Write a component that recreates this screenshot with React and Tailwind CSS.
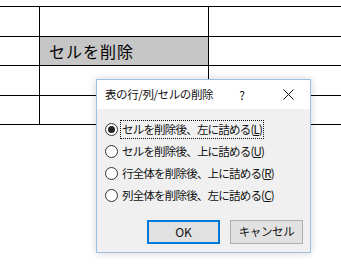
import React from 'react';

const font = { fontFamily: '"Noto Sans CJK JP", "Noto Sans", sans-serif' };

const options = [
  { label: 'セルを削除後、左に詰める', key: 'L', checked: true },
  { label: 'セルを削除後、上に詰める', key: 'U' },
  { label: '行全体を削除後、上に詰める', key: 'R' },
  { label: '列全体を削除後、左に詰める', key: 'C' },
];

const Row = ({ children, h }) => (
  <div className={`flex border-t border-black ${h}`}>
    <div className="w-[39px]" />
    <div className="w-[169px] border-l border-black flex">{children}</div>
    <div className="flex-1 border-l border-black" />
  </div>
);

const Radio = ({ checked }) => (
  <span className="w-[13px] h-[13px] rounded-full border border-[#333] bg-white flex items-center justify-center shrink-0">
    {checked && <span className="w-[7px] h-[7px] rounded-full bg-[#222]" />}
  </span>
);

export default function App() {
  return (
    <div className="relative w-[341px] h-[279px] bg-white overflow-hidden" style={font}>
      {/* table behind */}
      <div className="pt-[6px]">
        <Row h="h-[30px]" />
        <Row h="h-[29px]">
          <div className="flex-1 bg-[#c6c6c6] flex items-center pl-[9px] text-[16px] text-black tracking-[1px]">
            セルを削除
          </div>
        </Row>
        <Row h="h-[30px]" />
        <Row h="h-[29px]" />
        <div className="border-t border-black" />
      </div>

      {/* dialog */}
      <div className="absolute left-[96px] top-[79px] w-[215px] h-[174px] border border-[#9cc1e6] bg-[#f0f0f0] shadow-[0_0_8px_rgba(0,0,0,0.18)] flex flex-col">
        <div className="h-[29px] bg-white flex items-center pl-[8px] text-[11.5px] text-[#111] tracking-[-0.4px]">
          <span>表の行/列/セルの削除</span>
          <span className="ml-[26px] text-[12px]">?</span>
          <svg className="ml-[39px]" width="11" height="11" viewBox="0 0 11 11">
            <path d="M0.5 0.5 L10.5 10.5 M10.5 0.5 L0.5 10.5" stroke="#111" strokeWidth="1" fill="none" />
          </svg>
        </div>
        <div className="pt-[9px] pl-[8px] flex flex-col">
          {options.map((o) => (
            <div key={o.key} className="h-[22px] flex items-center gap-[3px]">
              <Radio checked={o.checked} />
              <span
                className={`text-[11.5px] text-[#111] tracking-[-0.8px] px-[1px] leading-[17px] ${
                  o.checked ? 'outline outline-1 outline-dotted outline-[#111]' : ''
                }`}
              >
                {o.label}(<span className="underline">{o.key}</span>)
              </span>
            </div>
          ))}
        </div>
        <div className="mt-[14px] flex justify-end gap-[10px] pr-[7px]">
          <button className="w-[73px] h-[24px] border-2 border-[#0078d7] bg-[#e1e1e1] text-[12px] text-[#111]">
            OK
          </button>
          <button className="w-[73px] h-[24px] border border-[#adadad] bg-[#e1e1e1] text-[11.5px] text-[#111] tracking-[-0.4px]">
            キャンセル
          </button>
        </div>
      </div>
    </div>
  );
}
